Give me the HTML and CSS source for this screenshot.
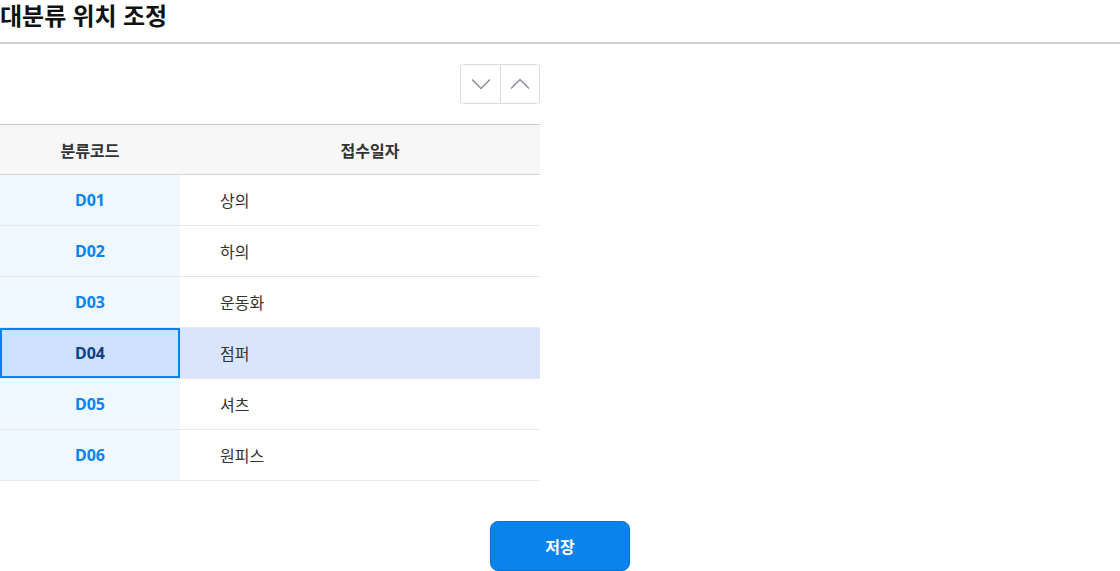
FILE: index.html
```html
<!DOCTYPE html>
<html lang="ko">
<head>
<meta charset="utf-8">
<link rel="stylesheet" href="styles.css">
</head>
<body>
<div class="page">
  <h1 class="title">대분류 위치 조정</h1>
  <div class="content">
    <div class="toolbar">
      <div class="btn-group">
        <button class="icon-btn" aria-label="아래로">
          <svg width="20" height="20" viewBox="0 0 20 20"><path d="M1 5.5 L10 14.5 L19 5.5" fill="none" stroke="#8a8f99" stroke-width="1.5"/></svg>
        </button>
        <button class="icon-btn" aria-label="위로">
          <svg width="20" height="20" viewBox="0 0 20 20"><path d="M1 14.5 L10 5.5 L19 14.5" fill="none" stroke="#8a8f99" stroke-width="1.5"/></svg>
        </button>
      </div>
    </div>
    <table class="grid">
      <thead>
        <tr><th class="c1">분류코드</th><th class="c2">접수일자</th></tr>
      </thead>
      <tbody>
        <tr><td class="code">D01</td><td class="name">상의</td></tr>
        <tr><td class="code">D02</td><td class="name">하의</td></tr>
        <tr><td class="code">D03</td><td class="name">운동화</td></tr>
        <tr class="selected"><td class="code">D04</td><td class="name">점퍼</td></tr>
        <tr><td class="code">D05</td><td class="name">셔츠</td></tr>
        <tr><td class="code">D06</td><td class="name">원피스</td></tr>
      </tbody>
    </table>
    <div class="actions">
      <button class="save">저장</button>
    </div>
  </div>
</div>
</body>
</html>
```
FILE: styles.css
```css
* { box-sizing: border-box; }
html, body { margin: 0; padding: 0; background: #fff; }
body {
  font-family: "Noto Sans", "Noto Sans CJK KR", sans-serif;
  color: #222;
}
.page { width: 1120px; }
.title {
  margin: 0;
  height: 44px;
  padding: 0;
  font-size: 24px;
  font-weight: 700;
  line-height: 32px;
  color: #111;
  border-bottom: 2px solid #cfcfcf;
}
.content { width: 540px; }
.toolbar {
  display: flex;
  justify-content: flex-end;
  padding-top: 20px;
  height: 80px;
}
.btn-group {
  display: flex;
  height: 40px;
  border: 1px solid #d9dbe0;
  border-radius: 4px;
  overflow: hidden;
}
.icon-btn {
  width: 39px;
  height: 38px;
  padding: 0;
  border: 0;
  background: #fff;
  display: flex;
  align-items: center;
  justify-content: center;
}
.icon-btn + .icon-btn { border-left: 1px solid #d9dbe0; }
.grid {
  width: 540px;
  border-collapse: collapse;
  font-size: 16px;
}
.grid th {
  height: 50px;
  background: #f7f7f7;
  border-top: 1px solid #cccccc;
  border-bottom: 1px solid #d6d6d6;
  font-weight: 700;
  color: #333;
  text-align: center;
  padding: 0;
}
.grid th.c1 { width: 180px; }
.grid th.c2 { padding-left: 20px; }
.grid td {
  height: 51px;
  border-bottom: 1px solid #e8e8e8;
  padding: 0;
}
.grid td.code {
  background: #eff7ff;
  color: #0a84ec;
  font-weight: 700;
  text-align: center;
}
.grid td.name {
  padding-left: 40px;
  color: #333;
}
.grid tr.selected td.code {
  background: #cde0fd;
  color: #0c3f86;
  box-shadow: inset 0 0 0 2px #0a84ec;
}
.grid tr.selected td.name { background: #d9e5fc; }
.actions {
  display: flex;
  justify-content: flex-end;
  padding-top: 40px;
  width: 630px;
}
.save {
  width: 140px;
  height: 50px;
  border: 1px solid #0670d6;
  border-radius: 8px;
  background: #0a84ec;
  color: #fff;
  font-family: inherit;
  font-size: 16px;
  font-weight: 700;
}
```
